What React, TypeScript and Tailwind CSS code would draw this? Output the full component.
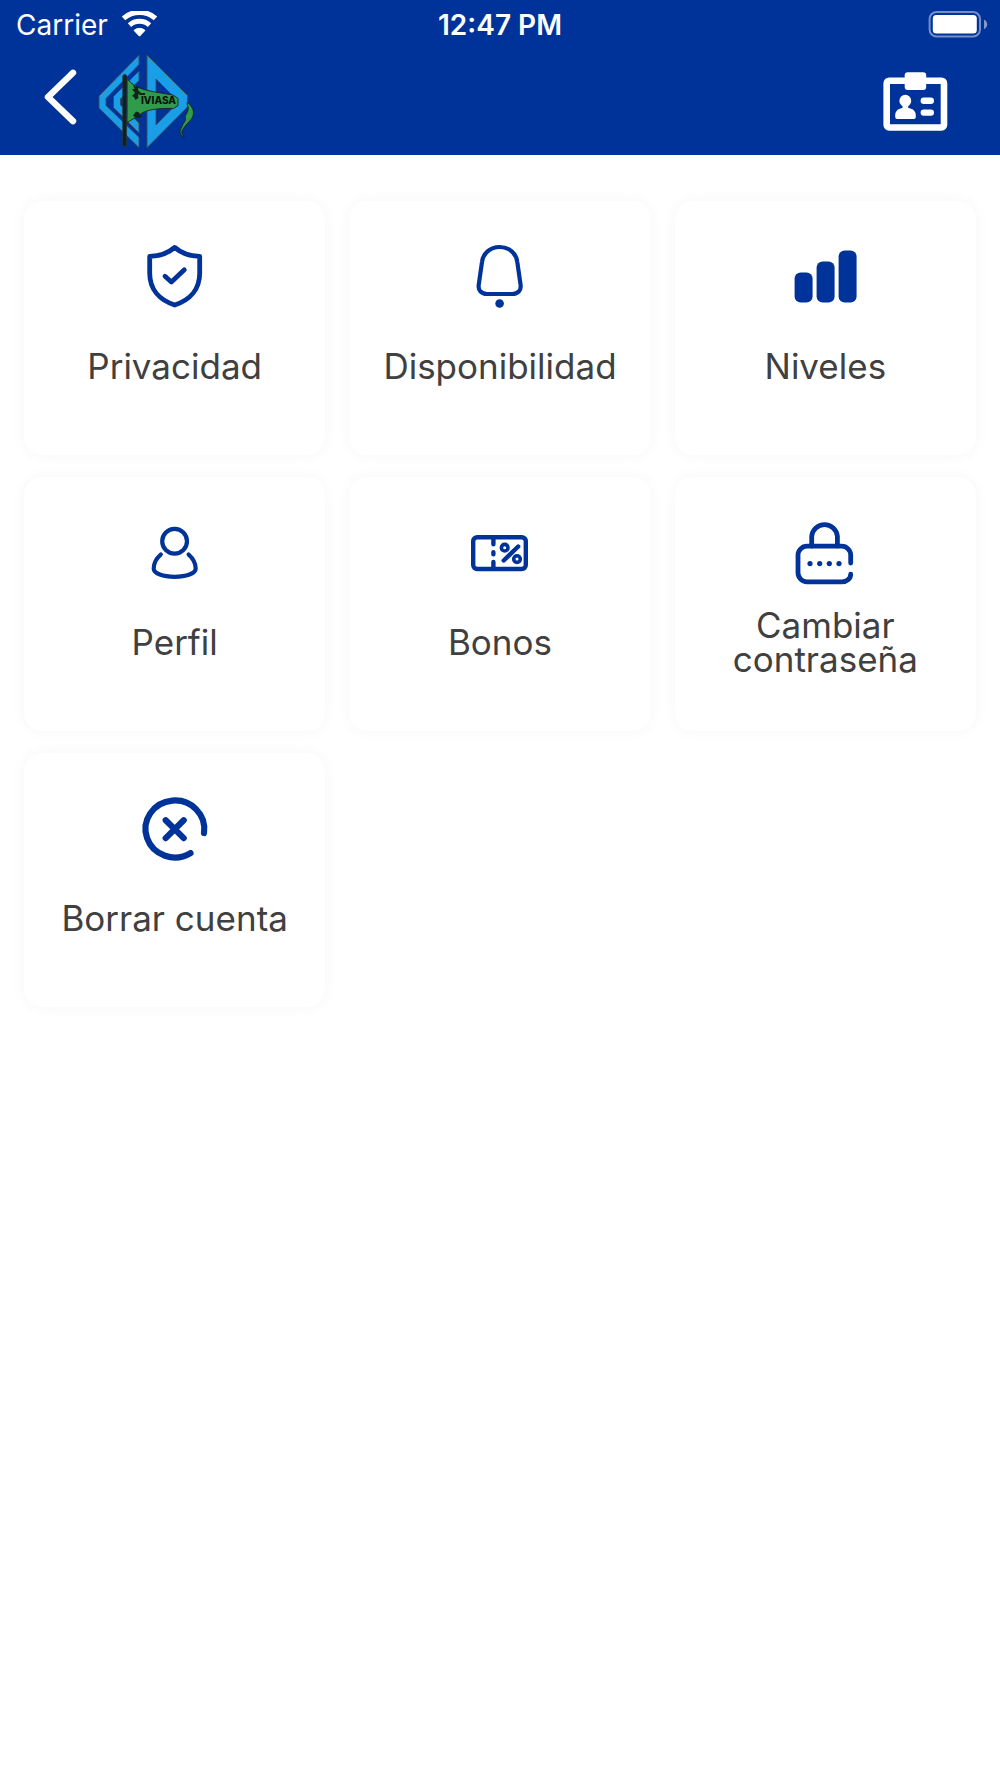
import React from 'react';

function WifiIcon() {
  return (
    <svg className="w-[38px] h-7" viewBox="0 0 38 28" fill="none" stroke="#fff" aria-hidden="true">
      <path d="M3.5 7.4A24 24 0 0 1 35.5 7.4" strokeWidth="5.2" />
      <path d="M9.5 14.1A15 15 0 0 1 29.5 14.1" strokeWidth="5" />
      <path d="M19.5 25.2L14 19.4A8.3 8.3 0 0 1 25 19.4Z" fill="#fff" strokeWidth="1" strokeLinejoin="round" />
    </svg>
  );
}

function BatteryIcon() {
  return (
    <svg className="w-[60px] h-7" viewBox="0 0 60 28" fill="none" aria-hidden="true">
      <rect x="1.6" y="1" width="50.4" height="24.6" rx="7" stroke="#fff" strokeOpacity="0.45" strokeWidth="2" />
      <rect x="4.8" y="4" width="44" height="18.4" rx="3.5" fill="#fff" />
      <path d="M56 8.4C58.2 9.4 59.2 11.2 59.2 13.3S58.2 17.2 56 18.2Z" fill="#fff" fillOpacity="0.5" />
    </svg>
  );
}

function ClubLogo() {
  return (
    <svg className="w-[104px] h-[100px]" viewBox="0 0 104 100" role="img" aria-label="CD Iviasa">
      <g fill="#1a9ee8" stroke="#3c4a55" strokeWidth="0.9">
        <path d="M43 4L3 45V57L43 96.7V86.3L10 54.5V47.5L43 13.5Z" />
        <path d="M43 20L17.5 45.5V56.5L43 82V72L24.5 54V48L43 29.5Z" />
        <path fillRule="evenodd" d="M51 4L91.5 44.5V56L51 96.7ZM60 28V74L81 52.5V49Z" />
      </g>
      <path
        d="M91.5 51C94 54 97.5 57 97.5 62C97.5 68 92 71 88.5 76C86 79.5 84.5 82 87 83.5L88.3 86.5L84.5 83C83 80 86 76 87 73C90 70 90 66.5 89 65C92.5 61 93 56 91 53Z"
        fill="#2f9c4c"
        stroke="#16241c"
        strokeWidth="0.9"
      />
      <path
        d="M31 27.5C35 33 41 36.5 48 38.5C57 41 68 42.5 77 44L82 47.5V54.5L77.5 57.5C66 57 54 58 47 61.5C41 65 36 69 31 71.5Z"
        fill="#2f9c4c"
        stroke="#16241c"
        strokeWidth="0.9"
      />
      <path d="M26.7 25Q28.7 21.5 31 25L30.5 95H26.7Z" fill="#0d2024" stroke="#2c3a3e" strokeWidth="0.7" />
      {/* figure and hat on the flag */}
      <path d="M37 34L40 36L42.5 35L42 39L45 42L49 42V44L44 44L42 43L42.5 47L39.5 49L38 46L36 45L39 42L36 38L38.5 38Z" fill="#10241a" />
      <path d="M37 64.5L40 60.5L43 61.5L44.5 64.5L47 65.5C43 67.5 40 67.5 37 64.5Z" fill="#10241a" />
      <text x="45" y="53" className="font-['Inter'] text-[10px] font-extrabold" fill="#0a120e">IVIASA</text>
    </svg>
  );
}

function IdCardIcon() {
  return (
    <svg className="w-16 h-16 overflow-visible" viewBox="0 0 64 64" fill="none" aria-hidden="true">
      <rect x="2.7" y="11.7" width="57.3" height="46.8" rx="2.5" stroke="#fff" strokeWidth="6.6" />
      <rect x="20.7" y="3.2" width="21.5" height="17.8" rx="3" fill="#fff" />
      <path
        d="M21.3 25.8A5.9 5.9 0 0 1 27.2 31.7C27.2 34.2 26 35.7 24.4 37C23.8 38 24 39 25.5 39.3C29.5 40.2 31.8 42.5 31.8 46.5V48Q31.8 50 29.8 50H13.2Q11.2 50 11.2 48V46.5C11.2 42.5 13.5 40.2 17.3 39.3C18.8 39 19 38 18.3 37C16.6 35.7 15.4 34.2 15.4 31.7A5.9 5.9 0 0 1 21.3 25.8Z"
        fill="#fff"
      />
      <path d="M39.8 31.8H46.8M39.8 43.6H46.8" stroke="#fff" strokeWidth="6.4" strokeLinecap="round" />
    </svg>
  );
}

function CardIcon({ children }: { children: React.ReactNode }) {
  return (
    <svg
      className="w-16 h-16 overflow-visible text-[#003399]"
      viewBox="0 0 64 64"
      fill="none"
      stroke="currentColor"
      strokeLinecap="round"
      strokeLinejoin="round"
      aria-hidden="true"
    >
      {children}
    </svg>
  );
}

const items = [
  {
    label: 'Privacidad',
    icon: (
      <g strokeWidth="4.8">
        <path d="M31.7 3.4C26 8.5 18 12 6.7 12.4V29C6.7 45 16 56 31.7 61C47.4 56 56.7 45 56.7 29V12.4C45.4 12 37.4 8.5 31.7 3.4Z" />
        <path d="M22 32.2L28.4 38L41.3 25.8" />
      </g>
    ),
  },
  {
    label: 'Disponibilidad',
    icon: (
      <>
        <path d="M31.6 3C22 3 15 9.5 14 18L10.7 41C10 46.5 13.5 50 19 50H44.3C49.8 50 53.3 46.5 52.6 41L49.3 18C48.3 9.5 41.3 3 31.6 3Z" strokeWidth="4.2" />
        <circle cx="31.6" cy="59.5" r="4.3" fill="currentColor" stroke="none" />
      </>
    ),
  },
  {
    label: 'Niveles',
    icon: (
      <g fill="currentColor" stroke="none">
        <rect x="1.6" y="28.6" width="18" height="30" rx="6" />
        <rect x="23.6" y="17.6" width="18" height="41" rx="6" />
        <rect x="45.6" y="6.6" width="18" height="52" rx="6" />
      </g>
    ),
  },
  {
    label: 'Perfil',
    icon: (
      <g strokeWidth="4.2">
        <circle cx="31.6" cy="21.3" r="12.4" />
        <path d="M17.8 34.5C13.3 38.5 10.7 43.5 10.7 48.5C10.7 53.5 20 56.8 31.6 56.8S52.7 53.5 52.7 48.5C52.7 43.5 50 38.5 45.6 34.5" />
      </g>
    ),
  },
  {
    label: 'Bonos',
    icon: (
      <g strokeWidth="4.4">
        <rect x="5.2" y="17.2" width="52.6" height="31.8" rx="4" />
        <path d="M25.4 18.5V24.3M25.4 32.2V34.2M25.4 42V47.5" />
        <path d="M50.2 26.5L35.7 40.5" />
        <circle cx="36.7" cy="27.7" r="3.3" strokeWidth="3.6" />
        <circle cx="49" cy="39.1" r="3.3" strokeWidth="3.6" />
      </g>
    ),
  },
  {
    label: 'Cambiar contraseña',
    icon: (
      <>
        <path d="M18.7 26V16.3A12.9 12.9 0 0 1 44.4 16.3V26" strokeWidth="4.8" />
        <path d="M57.7 43V35.2A9 9 0 0 0 48.7 26.2H14A9 9 0 0 0 5 35.2V52.8A9 9 0 0 0 14 61.8H48.7C54 61.8 57.7 58.5 57.7 54.2" strokeWidth="4.8" />
        <g fill="currentColor" stroke="none">
          <circle cx="17" cy="43.6" r="2.6" />
          <circle cx="26.7" cy="43.6" r="2.6" />
          <circle cx="36.3" cy="43.6" r="2.6" />
          <circle cx="46" cy="43.6" r="2.6" />
        </g>
      </>
    ),
  },
  {
    label: 'Borrar cuenta',
    icon: (
      <g strokeWidth="6.2">
        <path d="M61 37A29.4 28.5 0 1 0 47.5 57.1" />
        <path d="M22.7 24.3L40.7 42.1M40.7 24.3L22.7 42.1" />
      </g>
    ),
  },
];

export default function App() {
  return (
    <div className="min-h-screen bg-white font-['Inter',sans-serif]">
      <header className="bg-[#003399] text-white">
        <div className="grid grid-cols-3 items-center h-[47px] pt-[3px] px-3 text-[28px] leading-8">
          <div className="flex items-center gap-3 pl-1">
            <span>Carrier</span>
            <WifiIcon />
          </div>
          <span className="text-center font-semibold">12:47 PM</span>
          <div className="flex justify-end">
            <BatteryIcon />
          </div>
        </div>
        <div className="flex items-center h-[108px] pl-10 pr-[52px]">
          <button type="button" aria-label="Volver" className="w-14">
            <svg className="w-14 h-[70px]" viewBox="0 0 56 70" fill="none" stroke="#fff" strokeWidth="6.4" strokeLinecap="round" strokeLinejoin="round">
              <path d="M33 6.8L8 31L33 55.1" />
            </svg>
          </button>
          <ClubLogo />
          <button type="button" aria-label="Carnet" className="ml-auto">
            <IdCardIcon />
          </button>
        </div>
      </header>

      <main className="grid grid-cols-3 gap-x-6 gap-y-[22px] px-6 pt-[46px] pb-6">
        {items.map((item) => (
          <button
            key={item.label}
            type="button"
            className="flex flex-col items-center h-[254px] pt-[43px] px-5 rounded-[18px] bg-white shadow-[0_0_16px_rgba(0,0,0,0.04)]"
          >
            <CardIcon>{item.icon}</CardIcon>
            <span className="mt-6 flex items-center h-[68px] text-[35px] leading-[34px] text-[#404040]">
              {item.label}
            </span>
          </button>
        ))}
      </main>
    </div>
  );
}
